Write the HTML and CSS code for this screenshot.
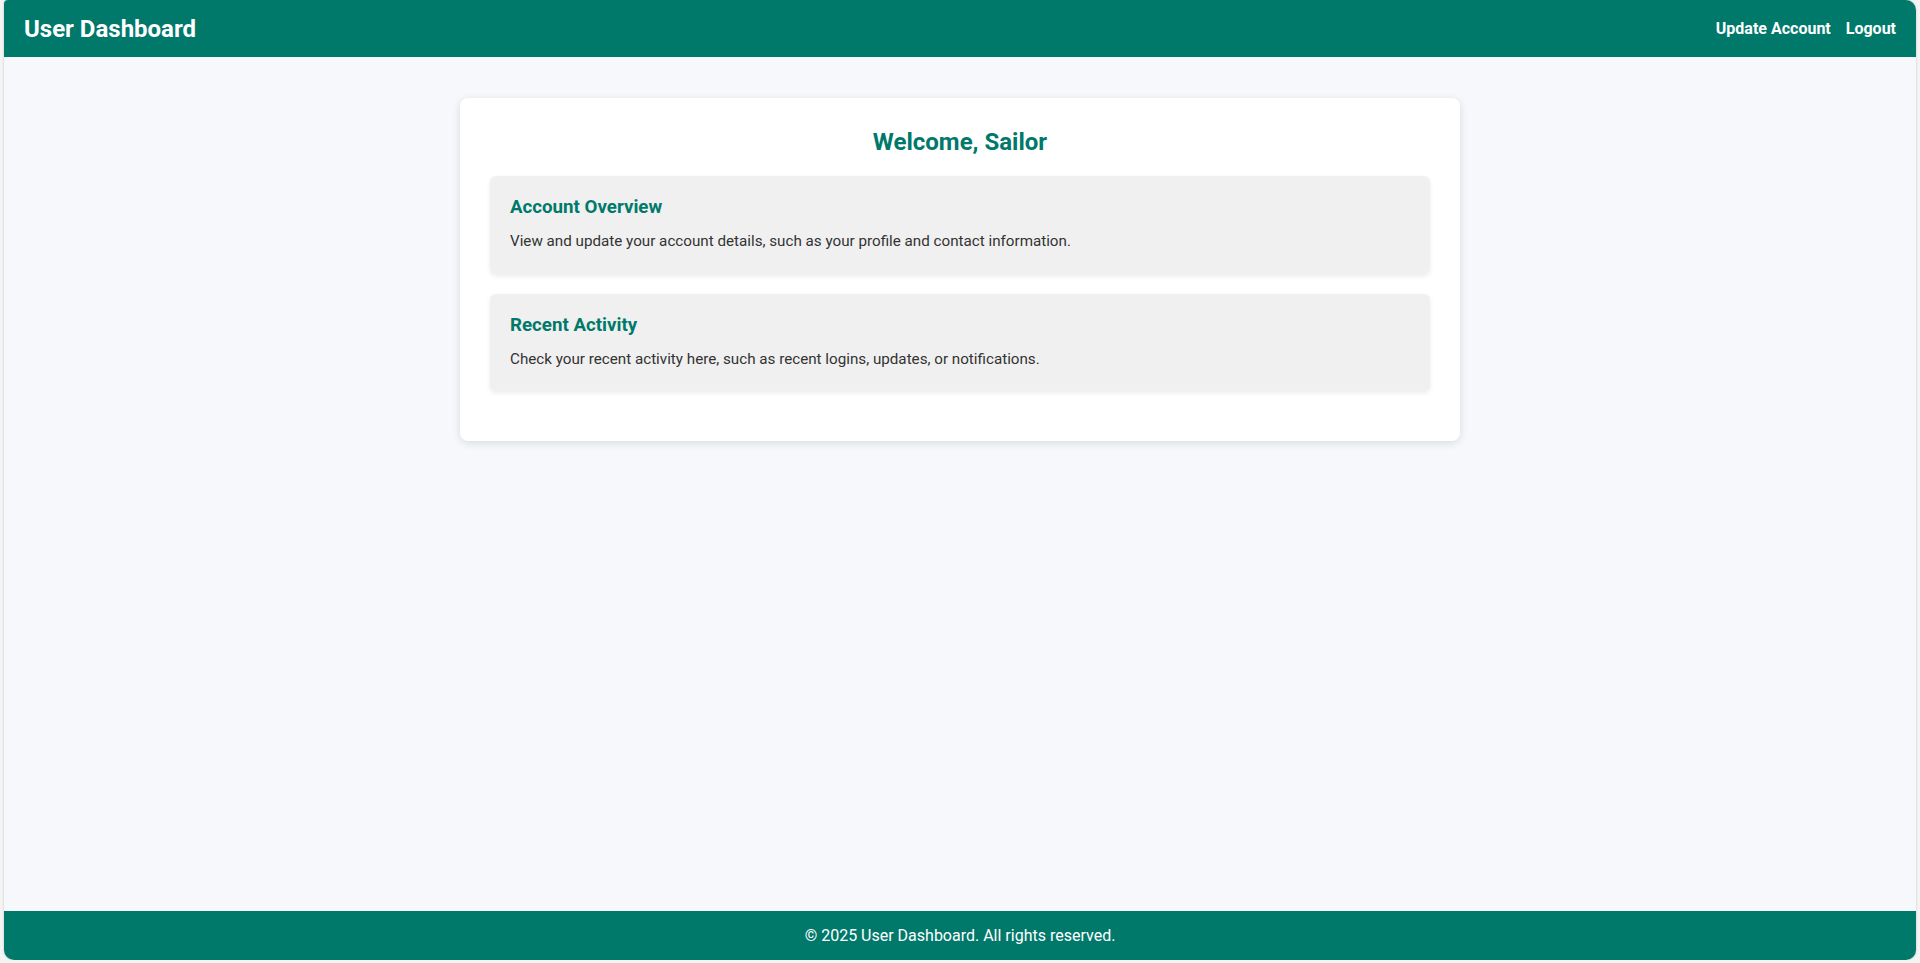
FILE: index.html
```html
<!DOCTYPE html>
<html lang="en">
<head>
<meta charset="utf-8">
<title>User Dashboard</title>
<link rel="stylesheet" href="styles.css">
</head>
<body>
<div class="frame">
  <header class="topbar">
    <h1 class="brand">User Dashboard</h1>
    <nav class="nav">
      <a href="#" class="nav-link">Update Account</a>
      <a href="#" class="nav-link">Logout</a>
    </nav>
  </header>
  <main class="main">
    <div class="card">
      <h2 class="welcome">Welcome, Sailor</h2>
      <section class="panel">
        <h3 class="panel-title">Account Overview</h3>
        <p class="panel-text">View and update your account details, such as your profile and contact information.</p>
      </section>
      <section class="panel">
        <h3 class="panel-title">Recent Activity</h3>
        <p class="panel-text">Check your recent activity here, such as recent logins, updates, or notifications.</p>
      </section>
    </div>
  </main>
  <footer class="footer">
    <p class="footer-text">&copy; 2025 User Dashboard. All rights reserved.</p>
  </footer>
</div>
</body>
</html>
```
FILE: styles.css
```css
* { box-sizing: border-box; }
html, body { margin: 0; padding: 0; }
body {
  background: #f4f4f4;
  font-family: Roboto, "Liberation Sans", Arial, sans-serif;
  color: #333;
}
.frame {
  margin: 0 4px 0 4px;
  height: 960px;
  display: flex;
  flex-direction: column;
  background: #f7f8fb;
  border-radius: 4px 10px 10px 10px;
  overflow: hidden;
  box-shadow: 0 0 2px rgba(0,0,0,0.25);
}
.topbar {
  height: 57px;
  flex: 0 0 auto;
  background: #00796b;
  color: #fff;
  display: flex;
  align-items: center;
  justify-content: space-between;
  padding: 0 20px;
}
.brand {
  margin: 0;
  font-size: 24px;
  font-weight: 700;
}
.nav { display: flex; gap: 15px; }
.nav-link {
  color: #fff;
  text-decoration: none;
  font-weight: 700;
  font-size: 16px;
}
.main {
  flex: 1 1 auto;
  padding-top: 41px;
}
.card {
  width: 1000px;
  margin: 0 auto;
  background: #fff;
  border-radius: 8px;
  padding: 30px 30px 30px;
  box-shadow: 0 2px 8px rgba(0,0,0,0.12);
}
.welcome {
  margin: 0 0 20px;
  text-align: center;
  color: #00796b;
  font-size: 24px;
  line-height: 28px;
  font-weight: 700;
}
.panel {
  background: #f0f0f0;
  border-radius: 6px;
  padding: 20px;
  margin-bottom: 20px;
  box-shadow: 0 2px 5px rgba(0,0,0,0.08);
}
.panel-title {
  margin: 0 0 10px;
  color: #00796b;
  font-size: 18.72px;
  line-height: 23px;
  font-weight: 700;
}
.panel-text {
  margin: 0;
  font-size: 15.2px;
  line-height: 24.5px;
  color: #333;
}
.footer {
  flex: 0 0 auto;
  height: 49px;
  background: #00796b;
  color: #fff;
  display: flex;
  align-items: center;
  justify-content: center;
}
.footer-text {
  margin: 0;
  font-size: 16px;
}
```
